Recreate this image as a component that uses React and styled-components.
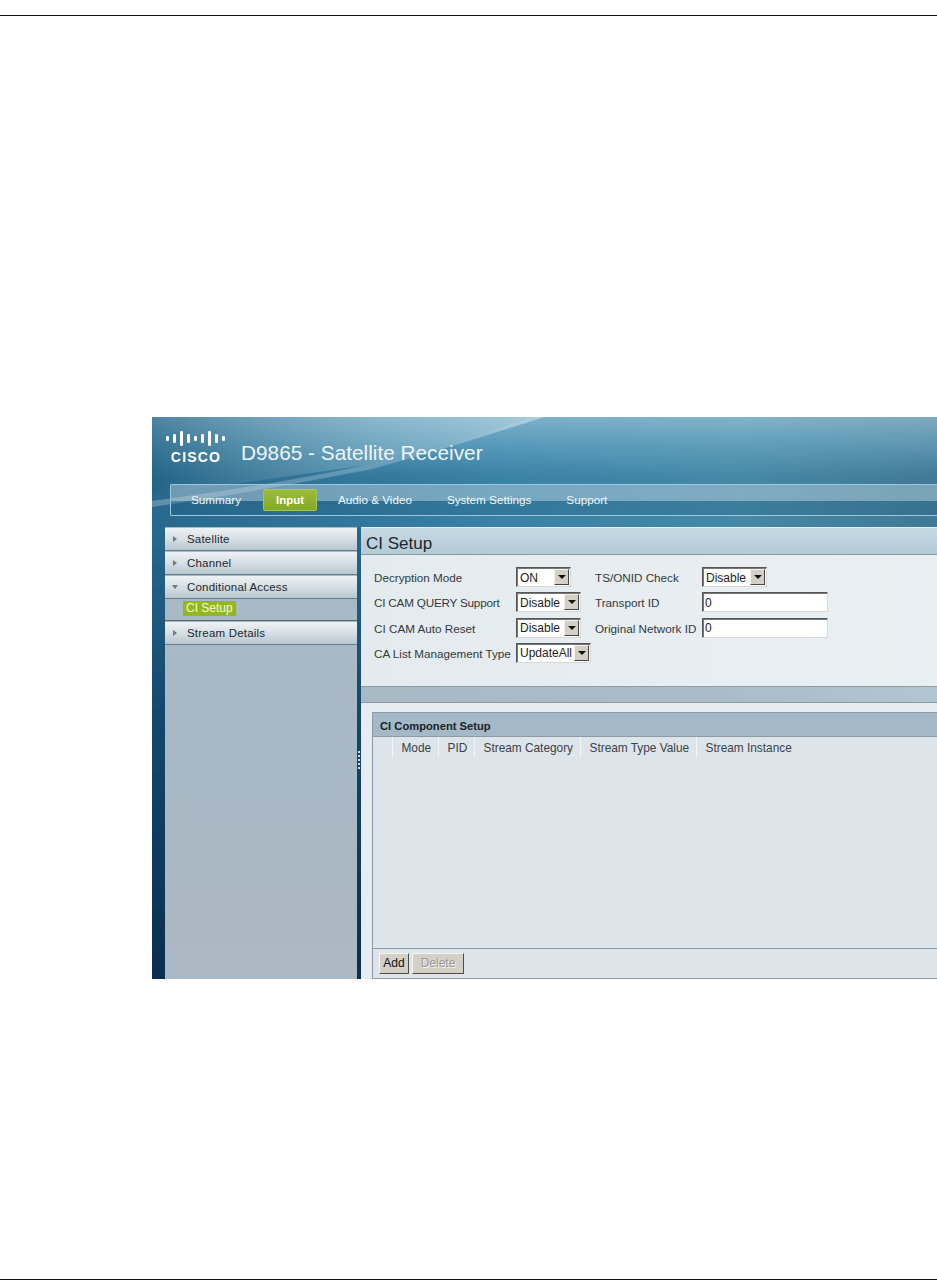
import styled, { createGlobalStyle } from "styled-components";

const GlobalStyle = createGlobalStyle`
  html, body {
    margin: 0;
    padding: 0;
    background: #fff;
  }
  * {
    box-sizing: border-box;
  }
`;

const Page = styled.div`
  width: 937px;
  height: 1285px;
  padding-top: 15px;
  overflow: hidden;
  font-family: "Liberation Sans", Arial, sans-serif;
  display: flex;
  flex-direction: column;
`;

const Rule = styled.div`
  height: 1px;
  background: #111;
  flex: none;
`;

const Shot = styled.div`
  width: 785px;
  height: 562px;
  margin: 401px 0 300px 152px;
  display: flex;
  flex-direction: column;
  flex: none;
  overflow: hidden;
`;

const Header = styled.header`
  position: relative;
  height: 110px;
  flex: none;
  padding: 14px 0 0 14px;
  background:
    linear-gradient(180deg, rgba(190, 222, 236, 0.5) 0, rgba(150, 205, 228, 0.32) 28px, rgba(120, 180, 210, 0) 60px),
    linear-gradient(90deg, #28688c 0%, #3a82a6 45%, #4688a6 75%, #407996 100%);
`;

const HeaderArt = styled.svg`
  position: absolute;
  left: 0;
  top: 0;
`;

const Brand = styled.div`
  position: relative;
  display: flex;
  align-items: flex-start;
  gap: 15px;
  height: 53px;
`;

const Logo = styled.div`
  width: 60px;
  display: flex;
  flex-direction: column;
  align-items: center;
`;

const LogoWord = styled.span`
  font-size: 14px;
  line-height: 14px;
  font-weight: 700;
  letter-spacing: 1.2px;
  color: #fff;
  text-transform: uppercase;
  margin-top: 4px;
`;

const ProductName = styled.h1`
  margin: 10px 0 0;
  font-size: 20.8px;
  line-height: 24px;
  font-weight: 400;
  color: #eef5f8;
`;

const NavBar = styled.nav`
  position: relative;
  height: 32px;
  margin-left: 4px;
  border: 1px solid #9cc8dc;
  border-right: none;
  border-radius: 2px 0 0 2px;
  display: flex;
  align-items: center;
  padding-left: 20px;
  background: linear-gradient(180deg, rgba(205, 220, 228, 0.42) 0 16px, rgba(30, 90, 125, 0.25) 16px 100%);
`;

const NavItem = styled.span`
  padding-bottom: 2px;
  font-size: 11.7px;
  color: #f2f7f9;
  white-space: nowrap;
  margin-right: ${(p) => p.$gap}px;
`;

const NavActive = styled.span`
  width: 54px;
  height: 22px;
  margin-right: 21px;
  border-radius: 2px;
  display: flex;
  align-items: center;
  justify-content: center;
  font-size: 11.5px;
  font-weight: 700;
  color: #fff;
  background: linear-gradient(180deg, #9cbc3c 0%, #84aa24 100%);
  border: 1px solid #a9c45c;
`;

const Body = styled.div`
  flex: 1;
  display: flex;
  min-height: 0;
  padding-left: 13px;
  background: linear-gradient(180deg, #27698c 0%, #14486f 40%, #0a2e50 100%);
`;

const Sidebar = styled.aside`
  width: 192px;
  flex: none;
  padding-top: 1px;
  background: linear-gradient(180deg, #a9bbc6 0%, #a8b8c4 50%, #acb8c3 100%);
`;

const Section = styled.div`
  height: 23px;
  margin-bottom: 1px;
  display: flex;
  align-items: center;
  padding-left: 7px;
  font-size: 11.5px;
  letter-spacing: 0.2px;
  color: #22282c;
  background: linear-gradient(180deg, #eef2f4 0%, #d6dfe4 50%, #b9c6ce 100%);
  border-bottom: 1px solid #6d7d88;
`;

const Caret = styled.span`
  width: 0;
  height: 0;
  flex: none;
  border-style: solid;
  ${(p) =>
    p.$open
      ? `border-width: 4px 3px 0 3px; border-color: #6b7a84 transparent transparent transparent; margin-right: 9px;`
      : `border-width: 3px 0 3px 4px; border-color: transparent transparent transparent #6b7a84; margin-left: 1px; margin-right: 10px;`}
`;

const SubList = styled.div`
  height: 22px;
  margin-top: -1px;
  padding-top: 2px;
  padding-left: 18px;
  display: flex;
  align-items: flex-start;
  border-bottom: 1px solid #56656f;
  margin-bottom: 1px;
`;

const SubItem = styled.span`
  height: 15px;
  line-height: 14px;
  padding: 0 3px;
  font-size: 12px;
  color: #f2f8dc;
  background: #92b81d;
`;

const Splitter = styled.div`
  width: 4px;
  flex: none;
  position: relative;
`;

const Grip = styled.span`
  position: absolute;
  left: 1px;
  top: 224px;
  width: 2px;
  height: 18px;
  background: repeating-linear-gradient(180deg, #d5dee4 0 2px, transparent 2px 4px);
`;

const Content = styled.main`
  flex: 1;
  min-width: 0;
  display: flex;
  flex-direction: column;
  background: #e6ecf0;
`;

const TitleBar = styled.div`
  height: 27px;
  flex: none;
  padding: 5px 0 0 5px;
  display: flex;
  align-items: center;
  background: linear-gradient(180deg, #c6dae3 0%, #b4cad5 100%);
  border-bottom: 1px solid #8a9aa5;
  margin-top: 1px;
`;

const Title = styled.h2`
  margin: 0;
  font-size: 17px;
  font-weight: 400;
  color: #20262a;
`;

const FormGrid = styled.div`
  height: 131px;
  flex: none;
  padding: 12px 0 0 13px;
  display: grid;
  grid-template-columns: 142px 79px 107px 1fr;
  grid-auto-rows: 20px;
  row-gap: 5.3px;
  align-items: center;
  background: linear-gradient(90deg, #e4ebef 0%, #eaeff2 100%);
`;

const Label = styled.label`
  padding-top: 1px;
  font-size: 11.7px;
  letter-spacing: ${(p) => (p.$tight ? "-0.2px" : "0")};
  color: #33393d;
  white-space: nowrap;
`;

const Select = styled.div`
  width: ${(p) => p.$w}px;
  height: 20px;
  display: flex;
  align-items: center;
  justify-content: space-between;
  padding: 1px 1px 0 3px;
  font-size: 12px;
  color: #222;
  background: #fff;
  border-style: solid;
  border-width: 1px;
  border-color: #555 #d8d8d4 #d8d8d4 #555;
  box-shadow: inset 1px 1px 0 #777;
`;

const SelectArrow = styled.span`
  width: 15px;
  height: 16px;
  margin-top: -1px;
  flex: none;
  display: flex;
  align-items: center;
  justify-content: center;
  background: #d4d0c8;
  border: 1px solid;
  border-color: #f4f2ec #444 #444 #f4f2ec;

  &::after {
    content: "";
    border-style: solid;
    border-width: 4px 4px 0 4px;
    border-color: #111 transparent transparent transparent;
  }
`;

const TextInput = styled.input`
  width: 126px;
  height: 20px;
  padding: 1px 2px 0;
  font: 12px "Liberation Sans", Arial, sans-serif;
  color: #222;
  background: #fff;
  outline: none;
  border-style: solid;
  border-width: 1px;
  border-color: #555 #d8d8d4 #d8d8d4 #555;
  box-shadow: inset 1px 1px 0 #777;
`;

const Band = styled.div`
  height: 17px;
  flex: none;
  background: linear-gradient(90deg, #a9bac5 0%, #a9bcc8 60%, #b0c6d2 100%);
  border-top: 1px solid #8b9aa4;
  border-bottom: 1px solid #8b9aa4;
`;

const Lower = styled.div`
  flex: 1;
  min-height: 0;
  padding: 9px 0 0 11px;
  display: flex;
`;

const Panel = styled.section`
  flex: 1;
  display: flex;
  flex-direction: column;
  background: #dde5eb;
  border: 1px solid #8b9aa4;
  border-right: none;
`;

const PanelTitle = styled.div`
  height: 24px;
  flex: none;
  display: flex;
  align-items: center;
  padding: 2px 0 0 7px;
  font-size: 11.2px;
  font-weight: 700;
  color: #1a2226;
  background: #a3b9c8;
  border-bottom: 1px solid #8b9aa4;
`;

const ColumnRow = styled.div`
  height: 20px;
  flex: none;
  display: flex;
  padding-left: 19px;
`;

const Column = styled.div`
  width: ${(p) => (p.$w ? `${p.$w}px` : "auto")};
  flex: none;
  padding-left: 8.5px;
  font-size: 11.85px;
  line-height: 22px;
  color: #3a4248;
  white-space: nowrap;
  overflow: hidden;
  border-left: 1px solid #f2f5f7;
`;

const PanelBody = styled.div`
  flex: 1;
`;

const PanelFooter = styled.div`
  height: 30px;
  flex: none;
  display: flex;
  align-items: flex-start;
  gap: 3px;
  padding: 4px 0 0 6px;
  border-top: 1px solid #8b9aa4;
`;

const Button = styled.button`
  height: 21px;
  width: ${(p) => p.$w}px;
  padding: 0 0 2px;
  font: 12px "Liberation Sans", Arial, sans-serif;
  color: ${(p) => (p.disabled ? "#9a9a94" : "#111")};
  text-shadow: ${(p) => (p.disabled ? "1px 1px 0 #f4f2ec" : "none")};
  background: #d4d0c8;
  border: 1px solid;
  border-color: #f6f5f0 #4c4c48 #4c4c48 #f6f5f0;
`;

// bar x position and height, taken from the logo in the header
const logoBars = [
  [0, 5], [7, 9], [14, 15], [21, 9], [28, 5], [35, 9], [42, 15], [49, 9], [56, 5],
];

const CiscoBars = () => (
  <svg width="60" height="15" viewBox="0 0 60 15" fill="#fff">
    {logoBars.map(([x, h]) => (
      <rect key={x} x={x} y={(15 - h) / 2} width="3" height={h} rx="1.2" />
    ))}
  </svg>
);

const Swoosh = () => (
  <HeaderArt width="785" height="110" viewBox="0 0 785 110">
    <defs>
      <linearGradient id="wedge" x1="0" y1="0" x2="1" y2="0">
        <stop offset="0" stopColor="#dcebf1" stopOpacity="0.3" />
        <stop offset="0.7" stopColor="#dcebf1" stopOpacity="0.25" />
        <stop offset="1" stopColor="#eaf4f8" stopOpacity="0.5" />
      </linearGradient>
      <linearGradient id="sky" x1="0" y1="0" x2="1" y2="0">
        <stop offset="0" stopColor="#1f5f80" stopOpacity="0.45" />
        <stop offset="0.6" stopColor="#b9d6e2" stopOpacity="0.3" />
        <stop offset="1" stopColor="#d5e8ef" stopOpacity="0.45" />
      </linearGradient>
    </defs>
    <path d="M0 0 L 381 0 Q 298 26 215 48 Q 98 65 0 78 Z" fill="url(#sky)" />
    <path d="M0 84 Q 120 68 215 48 Q 298 26 381 0 L 392 0 Q 300 30 220 52 Q 110 74 0 90 Z" fill="url(#wedge)" />
    <path d="M640 0 Q 720 18 785 42 L 785 0 Z" fill="#7fa6b5" fillOpacity="0.12" />
  </HeaderArt>
);

const sections = ["Satellite", "Channel"];

const App = () => {
  return (
    <>
      <GlobalStyle />
      <Page>
        <Rule />
        <Shot>
          <Header>
            <Swoosh />
            <Brand>
              <Logo>
                <CiscoBars />
                <LogoWord>cisco</LogoWord>
              </Logo>
              <ProductName>D9865 - Satellite Receiver</ProductName>
            </Brand>
            <NavBar>
              <NavItem $gap={22}>Summary</NavItem>
              <NavActive>Input</NavActive>
              <NavItem $gap={35}>Audio &amp; Video</NavItem>
              <NavItem $gap={35}>System Settings</NavItem>
              <NavItem $gap={0}>Support</NavItem>
            </NavBar>
          </Header>
          <Body>
            <Sidebar>
              {sections.map((name) => (
                <Section key={name}>
                  <Caret />
                  {name}
                </Section>
              ))}
              <Section>
                <Caret $open />
                Conditional Access
              </Section>
              <SubList>
                <SubItem>CI Setup</SubItem>
              </SubList>
              <Section>
                <Caret />
                Stream Details
              </Section>
            </Sidebar>
            <Splitter>
              <Grip />
            </Splitter>
            <Content>
              <TitleBar>
                <Title>CI Setup</Title>
              </TitleBar>
              <FormGrid>
                <Label>Decryption Mode</Label>
                <Select $w={55}>
                  ON
                  <SelectArrow />
                </Select>
                <Label>TS/ONID Check</Label>
                <Select $w={65}>
                  Disable
                  <SelectArrow />
                </Select>

                <Label $tight>CI CAM QUERY Support</Label>
                <Select $w={65}>
                  Disable
                  <SelectArrow />
                </Select>
                <Label>Transport ID</Label>
                <TextInput value="0" readOnly />

                <Label>CI CAM Auto Reset</Label>
                <Select $w={65}>
                  Disable
                  <SelectArrow />
                </Select>
                <Label>Original Network ID</Label>
                <TextInput value="0" readOnly />

                <Label>CA List Management Type</Label>
                <Select $w={75}>
                  UpdateAll
                  <SelectArrow />
                </Select>
              </FormGrid>
              <Band />
              <Lower>
                <Panel>
                  <PanelTitle>CI Component Setup</PanelTitle>
                  <ColumnRow>
                    <Column $w={46}>Mode</Column>
                    <Column $w={36}>PID</Column>
                    <Column $w={106}>Stream Category</Column>
                    <Column $w={116}>Stream Type Value</Column>
                    <Column>Stream Instance</Column>
                  </ColumnRow>
                  <PanelBody />
                  <PanelFooter>
                    <Button $w={30}>Add</Button>
                    <Button $w={52} disabled>
                      Delete
                    </Button>
                  </PanelFooter>
                </Panel>
              </Lower>
            </Content>
          </Body>
        </Shot>
        <Rule />
      </Page>
    </>
  );
};

export default App;
